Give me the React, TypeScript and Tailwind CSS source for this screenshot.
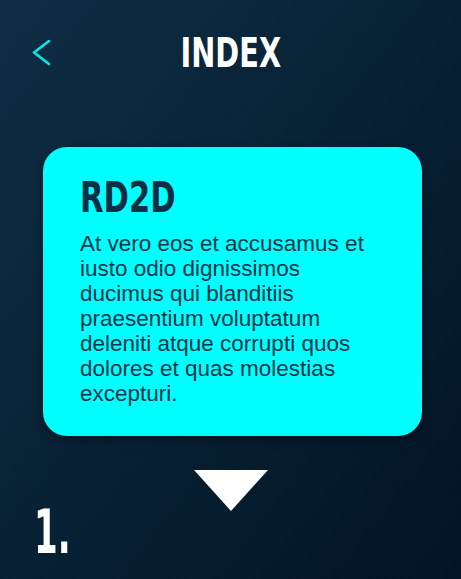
import React from "react";

const cond = { fontFamily: '"DejaVu Sans Condensed", "DejaVu Sans", sans-serif' };

export default function App() {
  return (
    <div className="w-[461px] h-[579px] overflow-hidden bg-gradient-to-br from-[#0f2e43] to-[#031426] flex flex-col">
      <div className="relative pt-[33px] h-[73px]">
        <svg className="absolute left-[32px] top-[39px]" width="20" height="28" viewBox="0 0 20 28" fill="none">
          <polyline points="17,2 2,13.5 17,25" stroke="#00e8f2" strokeWidth="2.6" strokeLinecap="round" strokeLinejoin="round" />
        </svg>
        <div className="text-center text-white font-bold text-[40px] leading-[40px]" style={cond}>
          <span className="inline-block scale-x-[0.8]">INDEX</span>
        </div>
      </div>
      <div className="mt-[74px] mx-[43px] w-[379px] rounded-[24px] bg-[#00ffff] pt-[29px] pb-[30px] px-[37px] shadow-[0_4px_10px_rgba(0,0,0,0.35)]">
        <div className="text-[#0c2f45] font-bold text-[43px] leading-[43px]" style={cond}>
          <span className="inline-block origin-left scale-x-[0.79]">RD2D</span>
        </div>
        <p className="mt-[12px] text-[#0d3548] text-[22.5px] leading-[25px]" style={{ fontFamily: '"Liberation Sans", Arial, sans-serif' }}>
          At vero eos et accusamus et iusto odio dignissimos ducimus qui blanditiis praesentium voluptatum deleniti atque corrupti quos dolores et quas molestias excepturi.
        </p>
      </div>
      <div className="mt-[34px] flex justify-center">
        <svg width="74" height="41" viewBox="0 0 74 41">
          <polygon points="0,0 74,0 37,41" fill="#ffffff" />
        </svg>
      </div>
      <div className="mt-[-10px] pl-[34px] text-white font-bold text-[61px] leading-[61px]" style={cond}>
        <span className="inline-block origin-left scale-x-[0.62]">1.</span>
      </div>
    </div>
  );
}
